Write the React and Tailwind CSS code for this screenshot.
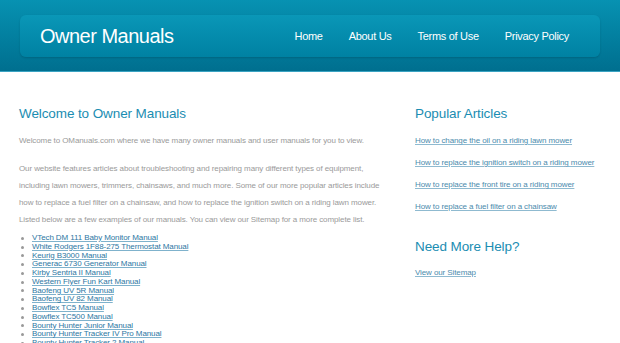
import React from "react";

const manuals = [
  "VTech DM 111 Baby Monitor Manual",
  "White Rodgers 1F88-275 Thermostat Manual",
  "Keurig B3000 Manual",
  "Generac 6730 Generator Manual",
  "Kirby Sentria II Manual",
  "Western Flyer Fun Kart Manual",
  "Baofeng UV 5R Manual",
  "Baofeng UV 82 Manual",
  "Bowflex TC5 Manual",
  "Bowflex TC500 Manual",
  "Bounty Hunter Junior Manual",
  "Bounty Hunter Tracker IV Pro Manual",
  "Bounty Hunter Tracker 2 Manual",
];

const articles = [
  "How to change the oil on a riding lawn mower",
  "How to replace the ignition switch on a riding mower",
  "How to replace the front tire on a riding mower",
  "How to replace a fuel filter on a chainsaw",
];

const App = () => {
  return (
    <div className="w-[620px] h-[343px] overflow-hidden bg-white font-['Liberation_Sans',Arial,sans-serif]">
      {/* header */}
      <header className="h-[72px] pt-[15px] px-[20px] bg-gradient-to-b from-[#0792b2] to-[#006f8f] border-b border-[#3ba3c2]">
        <div className="h-[42px] flex items-center justify-between pl-[20px] pr-[31px] rounded-[6px] bg-gradient-to-b from-[#0a97b7] to-[#0081a2] shadow-[0_1px_2px_rgba(0,0,0,0.15)]">
          <h1 className="text-white text-[20px] tracking-[-0.5px] leading-none">
            Owner Manuals
          </h1>
          <nav className="flex gap-[26px] text-white text-[11px] tracking-[-0.3px]">
            <span>Home</span>
            <span>About Us</span>
            <span>Terms of Use</span>
            <span>Privacy Policy</span>
          </nav>
        </div>
      </header>

      {/* body */}
      <div className="flex pl-[19px] pt-[32px]">
        <main className="w-[396px] pr-[20px]">
          <h2 className="text-[#1b8db2] text-[13.5px] leading-[20px] tracking-[-0.1px]">
            Welcome to Owner Manuals
          </h2>
          <p className="mt-[8px] text-[#9a9a9a] text-[8px] leading-[17px] tracking-[-0.1px]">
            Welcome to OManuals.com where we have many owner manuals and user manuals for you to view.
          </p>
          <p className="mt-[11px] text-[#9a9a9a] text-[8px] leading-[17px] tracking-[-0.1px]">
            Our website features articles about troubleshooting and repairing many different types of equipment,
            including lawn mowers, trimmers, chainsaws, and much more. Some of our more popular articles include
            how to replace a fuel filter on a chainsaw, and how to replace the ignition switch on a riding lawn mower.
            Listed below are a few examples of our manuals. You can view our Sitemap for a more complete list.
          </p>
          <ul className="mt-[6px] text-[8px] leading-[8.75px]">
            {manuals.map((m) => (
              <li key={m} className="flex items-center">
                <span className="w-[3px] h-[3px] rounded-full bg-[#999] ml-[2px] mr-[8px]" />
                <a className="text-[#2d77a3] underline decoration-[#7fb2cc] tracking-[-0.1px]">{m}</a>
              </li>
            ))}
          </ul>
        </main>

        <aside className="flex-1">
          <h2 className="text-[#1b8db2] text-[13.5px] leading-[20px] tracking-[-0.1px]">Popular Articles</h2>
          <div className="mt-[11px] flex flex-col gap-[11px]">
            {articles.map((a) => (
              <a key={a} className="text-[#4a8bad] underline decoration-[#8fbad0] text-[8px] leading-[11px] tracking-[-0.1px]">
                {a}
              </a>
            ))}
          </div>
          <h2 className="mt-[25px] text-[#1b8db2] text-[13.5px] leading-[20px] tracking-[-0.1px]">Need More Help?</h2>
          <a className="block mt-[10px] text-[#4a8bad] underline decoration-[#8fbad0] text-[8px] leading-[11px] tracking-[-0.1px]">
            View our Sitemap
          </a>
        </aside>
      </div>
    </div>
  );
};

export default App;
